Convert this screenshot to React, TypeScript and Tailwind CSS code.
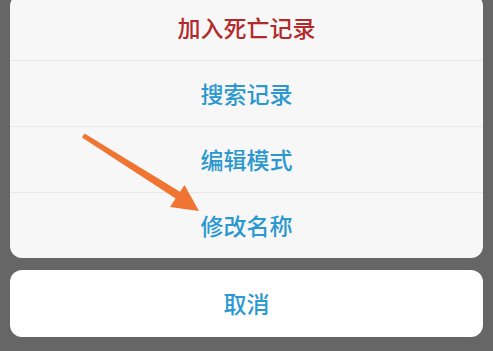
import React from 'react';

const items = [
  { label: '加入死亡记录', danger: true },
  { label: '搜索记录' },
  { label: '编辑模式' },
  { label: '修改名称' },
];

const Arrow: React.FC = () => (
  <svg className="absolute left-0 top-0 pointer-events-none" width="493" height="351" viewBox="0 0 493 351">
    <polygon points="82,137.5 84.5,133.5 182,193 178,200" fill="#f07432" />
    <polygon points="199,211 170,207 184.5,185" fill="#f07432" />
  </svg>
);

export default function App() {
  return (
    <div
      className="relative h-[351px] w-[493px] overflow-hidden bg-[#666666] px-[10px]"
      style={{ fontFamily: '"Noto Sans CJK SC", "Noto Sans", sans-serif' }}
    >
      <div className="-mt-[6px] overflow-hidden rounded-[12px] bg-[#f7f7f7]">
        {items.map((item, i) => (
          <div
            key={item.label}
            className={`flex h-[66px] items-center justify-center text-[23px] font-medium ${
              i > 0 ? 'border-t border-[#e8e8e8]' : ''
            } ${item.danger ? 'text-[#b32a2c]' : 'text-[#2b98cf]'}`}
          >
            {item.label}
          </div>
        ))}
      </div>
      <div className="mt-[12px] flex h-[67px] items-center justify-center rounded-[12px] bg-white text-[23px] font-medium text-[#2b98cf]">
        取消
      </div>
      <Arrow />
    </div>
  );
}
